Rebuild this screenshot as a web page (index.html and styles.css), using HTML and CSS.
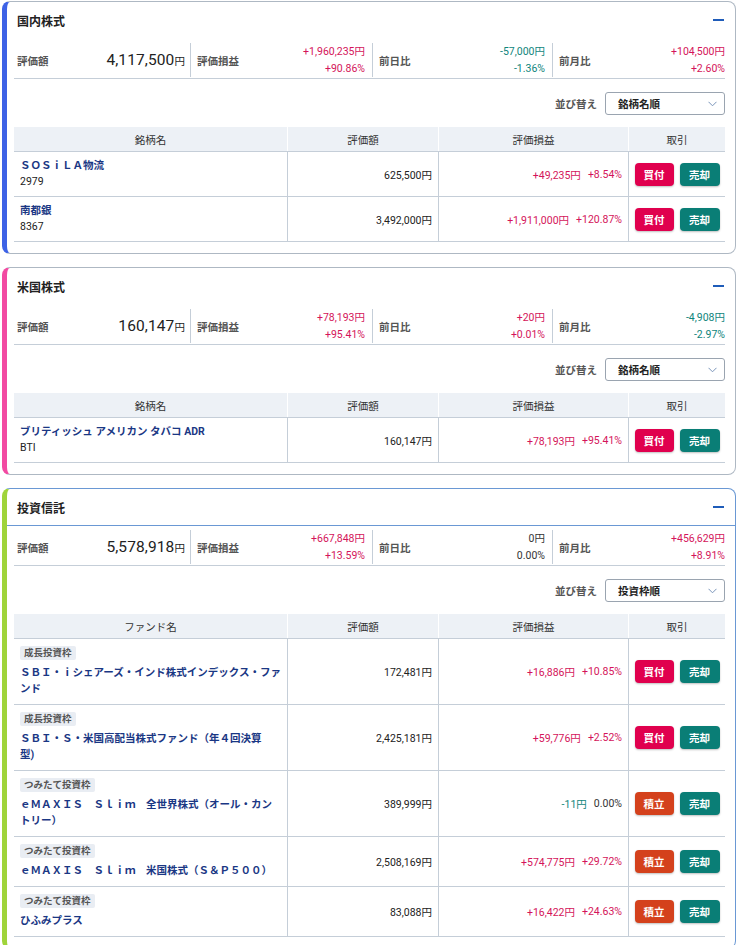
FILE: index.html
```html
<!DOCTYPE html>
<html lang="ja">
<head>
<meta charset="utf-8">
<link rel="stylesheet" href="styles.css">
</head>
<body>
<div class="page">

  <section class="card card-jp">
    <div class="card-head"><h2>国内株式</h2><span class="collapse"></span></div>
    <div class="summary">
      <div class="sum-item first"><span class="sum-label">評価額</span><span class="big">4,117,500<small>円</small></span></div>
      <div class="sum-item"><span class="sum-label">評価損益</span><span class="vals pos"><span>+1,960,235円</span><span>+90.86%</span></span></div>
      <div class="sum-item"><span class="sum-label">前日比</span><span class="vals neg"><span>-57,000円</span><span>-1.36%</span></span></div>
      <div class="sum-item last"><span class="sum-label">前月比</span><span class="vals pos"><span>+104,500円</span><span>+2.60%</span></span></div>
    </div>
    <div class="sort"><span class="sort-label">並び替え</span><div class="select"><span>銘柄名順</span><svg width="9" height="6" viewBox="0 0 9 6"><path d="M0.5 0.8 L4.5 4.8 L8.5 0.8" fill="none" stroke="#7a95ba" stroke-width="1"/></svg></div></div>
    <div class="grid">
      <div class="trow thead"><div class="c">銘柄名</div><div class="c">評価額</div><div class="c">評価損益</div><div class="c">取引</div></div>
      <div class="trow">
        <div class="c name"><div class="nm">ＳＯＳｉＬＡ物流</div><div class="code">2979</div></div>
        <div class="c num">625,500円</div>
        <div class="c pl"><span class="pos">+49,235円</span><span class="pos">+8.54%</span></div>
        <div class="c act"><span class="btn buy">買付</span><span class="btn sell">売却</span></div>
      </div>
      <div class="trow">
        <div class="c name"><div class="nm">南都銀</div><div class="code">8367</div></div>
        <div class="c num">3,492,000円</div>
        <div class="c pl"><span class="pos">+1,911,000円</span><span class="pos">+120.87%</span></div>
        <div class="c act"><span class="btn buy">買付</span><span class="btn sell">売却</span></div>
      </div>
    </div>
  </section>

  <section class="card card-us">
    <div class="card-head"><h2>米国株式</h2><span class="collapse"></span></div>
    <div class="summary">
      <div class="sum-item first"><span class="sum-label">評価額</span><span class="big">160,147<small>円</small></span></div>
      <div class="sum-item"><span class="sum-label">評価損益</span><span class="vals pos"><span>+78,193円</span><span>+95.41%</span></span></div>
      <div class="sum-item"><span class="sum-label">前日比</span><span class="vals pos"><span>+20円</span><span>+0.01%</span></span></div>
      <div class="sum-item last"><span class="sum-label">前月比</span><span class="vals neg"><span>-4,908円</span><span>-2.97%</span></span></div>
    </div>
    <div class="sort"><span class="sort-label">並び替え</span><div class="select"><span>銘柄名順</span><svg width="9" height="6" viewBox="0 0 9 6"><path d="M0.5 0.8 L4.5 4.8 L8.5 0.8" fill="none" stroke="#7a95ba" stroke-width="1"/></svg></div></div>
    <div class="grid">
      <div class="trow thead"><div class="c">銘柄名</div><div class="c">評価額</div><div class="c">評価損益</div><div class="c">取引</div></div>
      <div class="trow">
        <div class="c name"><div class="nm">ブリティッシュ アメリカン タバコ ADR</div><div class="code">BTI</div></div>
        <div class="c num">160,147円</div>
        <div class="c pl"><span class="pos">+78,193円</span><span class="pos">+95.41%</span></div>
        <div class="c act"><span class="btn buy">買付</span><span class="btn sell">売却</span></div>
      </div>
    </div>
  </section>

  <section class="card card-fund">
    <div class="card-head"><h2>投資信託</h2><span class="collapse"></span></div>
    <div class="summary">
      <div class="sum-item first"><span class="sum-label">評価額</span><span class="big">5,578,918<small>円</small></span></div>
      <div class="sum-item"><span class="sum-label">評価損益</span><span class="vals pos"><span>+667,848円</span><span>+13.59%</span></span></div>
      <div class="sum-item"><span class="sum-label">前日比</span><span class="vals"><span>0円</span><span>0.00%</span></span></div>
      <div class="sum-item last"><span class="sum-label">前月比</span><span class="vals pos"><span>+456,629円</span><span>+8.91%</span></span></div>
    </div>
    <div class="sort"><span class="sort-label">並び替え</span><div class="select"><span>投資枠順</span><svg width="9" height="6" viewBox="0 0 9 6"><path d="M0.5 0.8 L4.5 4.8 L8.5 0.8" fill="none" stroke="#7a95ba" stroke-width="1"/></svg></div></div>
    <div class="grid">
      <div class="trow thead"><div class="c">ファンド名</div><div class="c">評価額</div><div class="c">評価損益</div><div class="c">取引</div></div>
      <div class="trow fund">
        <div class="c name"><span class="badge">成長投資枠</span><div class="nm">ＳＢＩ・ｉシェアーズ・インド株式インデックス・ファ<br>ンド</div></div>
        <div class="c num">172,481円</div>
        <div class="c pl"><span class="pos">+16,886円</span><span class="pos">+10.85%</span></div>
        <div class="c act"><span class="btn buy">買付</span><span class="btn sell">売却</span></div>
      </div>
      <div class="trow fund">
        <div class="c name"><span class="badge">成長投資枠</span><div class="nm">ＳＢＩ・Ｓ・米国高配当株式ファンド（年４回決算<br>型)</div></div>
        <div class="c num">2,425,181円</div>
        <div class="c pl"><span class="pos">+59,776円</span><span class="pos">+2.52%</span></div>
        <div class="c act"><span class="btn buy">買付</span><span class="btn sell">売却</span></div>
      </div>
      <div class="trow fund">
        <div class="c name"><span class="badge">つみたて投資枠</span><div class="nm">ｅＭＡＸＩＳ　Ｓｌｉｍ　全世界株式（オール・カン<br>トリー）</div></div>
        <div class="c num">389,999円</div>
        <div class="c pl"><span class="neg">-11円</span><span>0.00%</span></div>
        <div class="c act"><span class="btn tsumi">積立</span><span class="btn sell">売却</span></div>
      </div>
      <div class="trow fund">
        <div class="c name"><span class="badge">つみたて投資枠</span><div class="nm">ｅＭＡＸＩＳ　Ｓｌｉｍ　米国株式（Ｓ＆Ｐ５００）</div></div>
        <div class="c num">2,508,169円</div>
        <div class="c pl"><span class="pos">+574,775円</span><span class="pos">+29.72%</span></div>
        <div class="c act"><span class="btn tsumi">積立</span><span class="btn sell">売却</span></div>
      </div>
      <div class="trow fund">
        <div class="c name"><span class="badge">つみたて投資枠</span><div class="nm">ひふみプラス</div></div>
        <div class="c num">83,088円</div>
        <div class="c pl"><span class="pos">+16,422円</span><span class="pos">+24.63%</span></div>
        <div class="c act"><span class="btn tsumi">積立</span><span class="btn sell">売却</span></div>
      </div>
    </div>
  </section>

</div>
</body>
</html>
```

FILE: styles.css
```css
* { box-sizing: border-box; }
html, body { margin: 0; padding: 0; background: #fff; }
body {
  font-family: Roboto, "Noto Sans CJK JP", sans-serif;
  font-size: 10.5px;
  color: #222;
}
.page { padding: 1px 2px 0; }

.card {
  border: 1px solid #aeb8c3;
  border-left: 5px solid #3d62e6;
  border-radius: 8px;
  padding: 0 10px 11px 7px;
  margin-bottom: 13px;
  background: #fff;
}
.card-us { border-left-color: #f24aa2; }
.card-fund { border-color: #6a98d4; border-left-color: #9fd43a; margin-top: 1px; }

.card-head {
  height: 37px;
  margin: 0 -10px 0 -7px;
  padding: 0 11px 0 10px;
  display: flex;
  align-items: center;
  justify-content: space-between;
}
.card-fund .card-head { border-bottom: 1px solid #6a98d4; }
.card-head h2 {
  margin: 0;
  font-size: 12px;
  font-weight: 700;
  color: #222;
}
.collapse {
  width: 11px;
  height: 2px;
  background: #1f5cb9;
  margin-top: -1px;
}

.summary {
  display: grid;
  grid-template-columns: 176px 182px 180px 1fr;
  height: 40px;
  border-bottom: 1px solid #c5ced8;
}
.sum-item {
  margin: 4px 0;
  display: flex;
  align-items: center;
  justify-content: space-between;
  padding: 0 7px 0 6px;
  border-left: 1px solid #c5ced8;
}
.sum-item.first { border-left: none; padding: 0 5px 0 3px; }
.sum-item.last { padding-right: 0; }
.sum-label { font-weight: 700; color: #555; }
.big { font-size: 15.5px; color: #222; letter-spacing: 0.1px; }
.big small { font-size: 10.5px; }
.vals {
  display: flex;
  flex-direction: column;
  align-items: flex-end;
  line-height: 17px;
  color: #333;
}
.pos { color: #d4145a; }
.neg { color: #0f857c; }
.vals.pos { color: #d4145a; }
.vals.neg { color: #0f857c; }

.sort {
  margin-top: 13px;
  display: flex;
  justify-content: flex-end;
  align-items: center;
  gap: 8px;
}
.sort-label { font-weight: 700; color: #555; }
.select {
  width: 120px;
  height: 23px;
  border: 1px solid #9aa4b0;
  border-radius: 3px;
  display: flex;
  align-items: center;
  justify-content: space-between;
  padding: 0 7px 0 12px;
  font-weight: 700;
  color: #222;
}

.grid { margin-top: 12px; }
.trow {
  display: grid;
  grid-template-columns: 273px 151px 190px 1fr;
  border-bottom: 1px solid #c5ced8;
}
.trow .c + .c { border-left: 1px solid #c5ced8; }
.thead {
  background: #edf1f6;
  height: 25px;
}
.thead .c {
  display: flex;
  align-items: center;
  justify-content: center;
  color: #333;
}
.thead .c + .c { border-left: 1px solid #ffffff; }

.name { padding: 6px 2px 6px 6px; }
.fund .name { padding: 7px 2px 7px 6px; }
.nm {
  font-weight: 700;
  color: #1a3784;
  line-height: 16px;
}
.code { line-height: 16px; color: #222; }
.badge {
  display: inline-block;
  height: 14px;
  line-height: 14px;
  padding: 0 4px;
  background: #e9edf3;
  color: #555;
  font-size: 9.5px;
  font-weight: 700;
  border-radius: 2px;
  margin-bottom: 5px;
}
.num {
  display: flex;
  align-items: center;
  justify-content: flex-end;
  padding-right: 6px;
}
.pl {
  display: flex;
  align-items: center;
  justify-content: flex-end;
  gap: 7px;
  padding-right: 6px;
  color: #333;
}
.act {
  display: flex;
  align-items: center;
  justify-content: center;
  gap: 6px;
}
.btn {
  width: 39px;
  height: 23px;
  border-radius: 4px;
  display: flex;
  align-items: center;
  justify-content: center;
  color: #fff;
  font-weight: 700;
  box-shadow: 0 1px 2px rgba(0,0,0,0.25);
}
.buy { background: #e0004e; }
.sell { background: #0a7e76; width: 40px; }
.tsumi { background: #d4411c; }
```
